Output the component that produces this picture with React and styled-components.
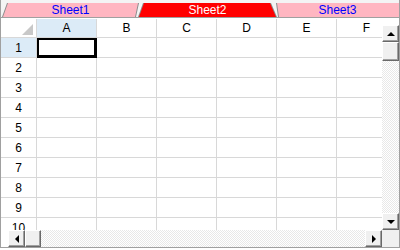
import React from "react";
import styled, { createGlobalStyle } from "styled-components";

const Global = createGlobalStyle`
  html, body { margin: 0; padding: 0; background: #fff; }
  body { font-family: "Liberation Sans", Arial, sans-serif; }
`;

const Frame = styled.div`
  width: 398px;
  height: 247px;
  border-left: 1px solid #a0a0a0;
  border-right: 1px solid #a0a0a0;
  border-bottom: 1px solid #a0a0a0;
  display: flex;
  flex-direction: column;
  background: #fff;
  overflow: hidden;
`;

const TabBar = styled.div`
  height: 18px;
  box-sizing: border-box;
  border-bottom: 1px solid #a0a0a0;
  background: #f4f4f4;
  display: flex;
  align-items: flex-end;
  flex: none;
`;

const Tab = styled.div`
  height: 14px;
  margin-left: ${(p) => p.$ml}px;
  width: ${(p) => (p.$w ? `${p.$w}px` : "auto")};
  flex: ${(p) => (p.$w ? "none" : "1")};
  background: #8c8c8c;
  clip-path: ${(p) => p.$clip};
  display: flex;
`;

const TabFace = styled.div`
  flex: 1;
  background: ${(p) => (p.$active ? "#ff0000" : "#ffb6c1")};
  color: ${(p) => (p.$active ? "#ffffff" : "#0000ff")};
  clip-path: ${(p) => p.$clip};
  font-size: 12px;
  line-height: 14px;
  text-align: center;
  white-space: nowrap;
`;

const Body = styled.div`
  flex: 1;
  display: grid;
  grid-template-columns: 1fr 17px;
  grid-template-rows: 1fr 17px;
  min-height: 0;
`;

const Sheet = styled.div`
  overflow: hidden;
  padding-top: 1px;
  min-height: 0;
`;

const Row = styled.div`
  display: flex;
  height: ${(p) => p.$h}px;
  flex: none;
`;

const Cell = styled.div`
  box-sizing: border-box;
  width: 60px;
  flex: none;
  height: 100%;
  border-right: 1px solid #d8d8d8;
  border-bottom: 1px solid #d8d8d8;
  background: ${(p) => (p.$sel ? "#dcebf7" : "#fff")};
  font-size: 12px;
  color: #000;
  display: flex;
  align-items: center;
  justify-content: center;
`;

const RowHead = styled(Cell)`
  width: 36px;
`;

const Corner = styled(Cell)`
  width: 36px;
  align-items: flex-end;
  justify-content: flex-end;
  padding: 0 3px 2px 0;
`;

const CornerMark = styled.div`
  width: 11px;
  height: 11px;
  background: #c8c8c8;
  clip-path: polygon(100% 0, 100% 100%, 0 100%);
`;

const Active = styled(Cell)`
  border: none;
  border-top: 2px solid #000;
  border-left: 2px solid #000;
  border-right: 3px solid #000;
  border-bottom: 3px solid #000;
`;

const dither = `repeating-conic-gradient(#e8e8e8 0 25%, #ffffff 0 50%) 0 0 / 2px 2px`;

const VScroll = styled.div`
  display: flex;
  flex-direction: column;
  background: #fff;
  padding-top: 7px;
`;

const HScroll = styled.div`
  display: flex;
  background: #fff;
  padding-left: 7px;
`;

const Track = styled.div`
  flex: 1;
  background: ${dither};
`;

const Btn = styled.div`
  box-sizing: border-box;
  width: ${(p) => p.$w || 17}px;
  height: ${(p) => p.$h || 17}px;
  flex: none;
  background: #f0f0f0;
  border: 1px solid;
  border-color: #ffffff #696969 #696969 #ffffff;
  box-shadow: inset -1px -1px #a0a0a0;
  display: flex;
  align-items: center;
  justify-content: center;
`;

const Arrow = styled.div`
  width: 0;
  height: 0;
  ${(p) =>
    p.$dir === "up"
      ? "border-left:4px solid transparent;border-right:4px solid transparent;border-bottom:4px solid #000;"
      : p.$dir === "down"
      ? "border-left:4px solid transparent;border-right:4px solid transparent;border-top:4px solid #000;"
      : p.$dir === "left"
      ? "border-top:4px solid transparent;border-bottom:4px solid transparent;border-right:4px solid #000;"
      : "border-top:4px solid transparent;border-bottom:4px solid transparent;border-left:4px solid #000;"}
`;

const CornerBox = styled.div`
  background: #f0f0f0;
`;

const cols = ["A", "B", "C", "D", "E", "F"];
const rows = [1, 2, 3, 4, 5, 6, 7, 8, 9, 10];

const tabs = [
  {
    name: "Sheet1",
    ml: 1,
    w: 137,
    outer: "polygon(0 100%, 5px 0, 100% 0, calc(100% - 3px) 100%)",
    inner: "polygon(1px 100%, 6px 0, calc(100% - 1px) 0, calc(100% - 4px) 100%)",
  },
  {
    name: "Sheet2",
    ml: -1,
    w: 139,
    active: true,
    outer: "polygon(0 100%, 5px 0, calc(100% - 6px) 0, 100% 100%)",
    inner: "polygon(1px 100%, 6px 0, calc(100% - 7px) 0, calc(100% - 1px) 100%)",
  },
  {
    name: "Sheet3",
    ml: -1,
    outer: "polygon(0 0, 100% 0, 100% 100%, 2px 100%)",
    inner: "polygon(1px 0, 100% 0, 100% 100%, 3px 100%)",
  },
];

export default function App() {
  return (
    <>
      <Global />
      <Frame>
        <TabBar>
          {tabs.map((t) => (
            <Tab key={t.name} $ml={t.ml} $w={t.w} $clip={t.outer}>
              <TabFace $active={t.active} $clip={t.inner}>
                {t.name}
              </TabFace>
            </Tab>
          ))}
        </TabBar>
        <Body>
          <Sheet>
            <Row $h={19}>
              <Corner>
                <CornerMark />
              </Corner>
              {cols.map((c) => (
                <Cell key={c} $sel={c === "A"}>
                  {c}
                </Cell>
              ))}
            </Row>
            {rows.map((r) => (
              <Row key={r} $h={20}>
                <RowHead $sel={r === 1}>{r}</RowHead>
                {cols.map((c) =>
                  r === 1 && c === "A" ? <Active key={c} /> : <Cell key={c} />
                )}
              </Row>
            ))}
          </Sheet>
          <VScroll>
            <Btn>
              <Arrow $dir="up" />
            </Btn>
            <Btn $h={19} />
            <Track />
            <Btn>
              <Arrow $dir="down" />
            </Btn>
          </VScroll>
          <HScroll>
            <Btn>
              <Arrow $dir="left" />
            </Btn>
            <Btn $w={16} />
            <Track />
            <Btn>
              <Arrow $dir="right" />
            </Btn>
          </HScroll>
          <CornerBox />
        </Body>
      </Frame>
    </>
  );
}
